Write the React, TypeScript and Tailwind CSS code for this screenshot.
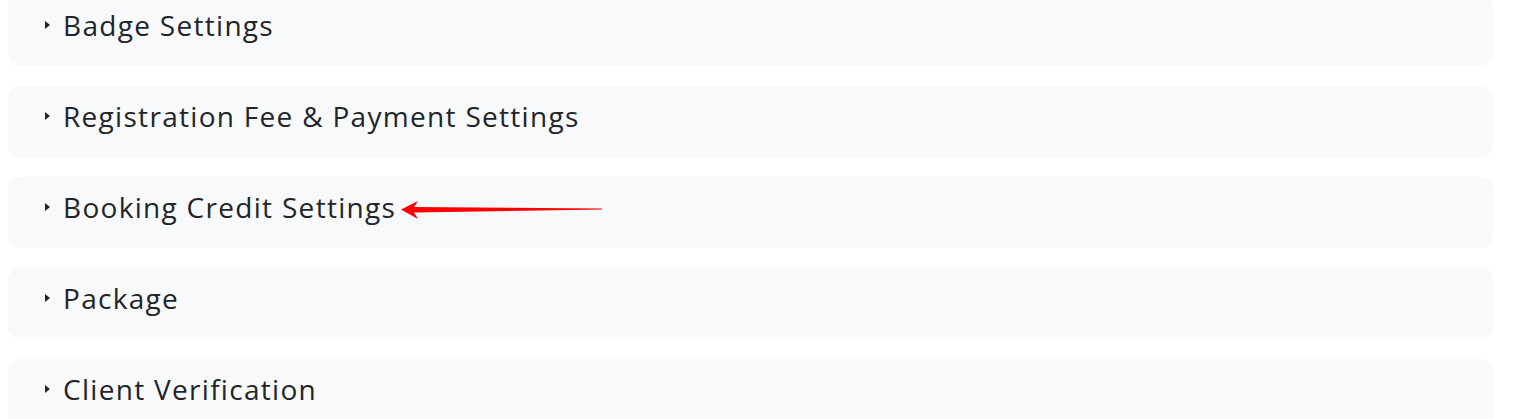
const sections = [
  "Badge Settings",
  "Registration Fee & Payment Settings",
  "Booking Credit Settings",
  "Package",
  "Client Verification",
];

function Caret() {
  return (
    <svg width="5" height="8" viewBox="0 0 5 8" className="shrink-0" aria-hidden="true">
      <path d="M0 0 L5 4 L0 8 Z" fill="#212529" />
    </svg>
  );
}

function PointerArrow() {
  return (
    <svg
      aria-hidden="true"
      className="absolute left-[392px] top-[23px] pointer-events-none"
      width="204"
      height="20"
      viewBox="0 0 204 20"
    >
      <path
        d="M1 9.5 L18 1 L14 7 L202 8.6 L202 9.6 L14 12.5 L18 19 Z"
        fill="#ff0000"
      />
    </svg>
  );
}

export default function App() {
  return (
    <div
      className="bg-white min-h-screen overflow-hidden"
      style={{ fontFamily: "'Open Sans', 'Noto Sans', sans-serif" }}
    >
      <div className="w-[1485px] ml-2 -mt-[5px] flex flex-col gap-5">
        {sections.map((title) => (
          <details key={title} className="bg-[#f8f9fa] rounded-xl">
            <summary className="relative list-none [&::-webkit-details-marker]:hidden flex items-center gap-[13px] pl-[37px] pt-3 pb-[23px] h-[71px] box-border text-[28px] tracking-[1.3px] font-normal leading-[36px] text-[#212529] cursor-pointer">
              <Caret />
              <span>{title}</span>
              {title === "Booking Credit Settings" && <PointerArrow />}
            </summary>
          </details>
        ))}
      </div>
    </div>
  );
}
